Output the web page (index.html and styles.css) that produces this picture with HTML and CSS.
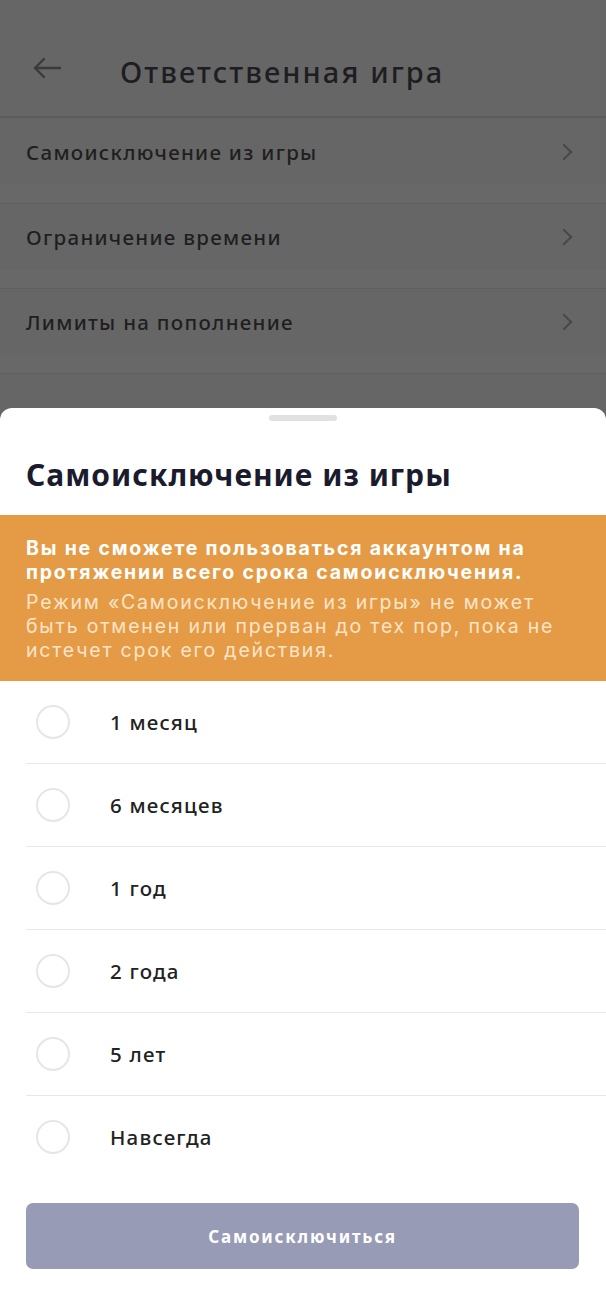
FILE: index.html
```html
<!DOCTYPE html>
<html lang="ru">
<head>
    <meta charset="UTF-8">
    <meta name="viewport" content="width=device-width, initial-scale=1.0">
    <title>Ответственная игра</title>
    <link rel="stylesheet" href="styles.css">
</head>
<body>
    <div class="screen">
        <header class="topbar">
            <svg class="back" width="30" height="22" viewBox="0 0 30 22">
                <path d="M28 11H3M12 2L3 11l9 9" fill="none" stroke="#3a3a3a" stroke-width="2.4" stroke-linecap="round" stroke-linejoin="round"/>
            </svg>
            <h1>Ответственная игра</h1>
        </header>

        <ul class="menu">
            <li>Самоисключение из игры <span class="chev"></span></li>
            <li>Ограничение времени <span class="chev"></span></li>
            <li>Лимиты на пополнение <span class="chev"></span></li>
        </ul>
    </div>

    <section class="sheet">
        <div class="handle"></div>
        <h2>Самоисключение из игры</h2>

        <div class="warning">
            <p class="warning-title">Вы не сможете пользоваться аккаунтом на<br>протяжении всего срока самоисключения.</p>
            <p>Режим «Самоисключение из игры» не может<br>быть отменен или прерван до тех пор, пока не<br>истечет срок его действия.</p>
        </div>

        <ul class="options">
            <li><span class="radio"></span>1 месяц</li>
            <li><span class="radio"></span>6 месяцев</li>
            <li><span class="radio"></span>1 год</li>
            <li><span class="radio"></span>2 года</li>
            <li><span class="radio"></span>5 лет</li>
            <li><span class="radio"></span>Навсегда</li>
        </ul>

        <button class="submit">Самоисключиться</button>
    </section>
</body>
</html>
```

FILE: styles.css
```css
body {
    margin: 0;
    width: 606px;
    height: 1310px;
    overflow: hidden;
    background-color: #666;
    font-family: "Noto Sans", "Open Sans", sans-serif;
    color: #1b1b1b;
}
.screen {
    height: 408px;
    background-color: #666;
}
.topbar {
    display: flex;
    align-items: center;
    height: 118px;
    padding: 26px 0 0 32px;
    box-sizing: border-box;
    border-bottom: 2px solid #5c5c5c;
}
.back {
    margin-top: -6px;
}
.topbar h1 {
    margin: 0 0 0 58px;
    font-size: 29px;
    font-weight: 500;
    letter-spacing: 2.1px;
    color: #1e1e22;
}
.menu {
    list-style: none;
    margin: 0;
    padding: 0;
}
.menu li {
    display: flex;
    justify-content: space-between;
    align-items: center;
    height: 67px;
    padding: 0 36px 0 26px;
    font-size: 20.5px;
    font-weight: 500;
    letter-spacing: 1.3px;
    color: #1f1f1f;
    border-bottom: 18px solid #686868;
    box-shadow: 0 1px 0 #5f5f5f;
}
.chev {
    width: 10px;
    height: 10px;
    border-top: 2.2px solid #484848;
    border-right: 2.2px solid #484848;
    transform: rotate(45deg);
}
.sheet {
    background-color: #fff;
    border-radius: 12px 12px 0 0;
    height: 902px;
    box-sizing: border-box;
    padding-top: 7px;
}
.handle {
    width: 68px;
    height: 6px;
    margin: 0 auto;
    border-radius: 3px;
    background-color: #e1e1e4;
}
.sheet h2 {
    margin: 0;
    padding: 33px 26px 0;
    height: 94px;
    box-sizing: border-box;
    font-size: 30px;
    font-weight: 700;
    letter-spacing: 1px;
    color: #1a1c2e;
}
.warning {
    background-color: #e59b46;
    padding: 21px 10px 19px 26px;
    color: #fff;
    font-family: Inter, "Noto Sans", sans-serif;
    font-size: 19.5px;
    line-height: 24px;
    white-space: nowrap;
}
.warning p {
    margin: 0;
    letter-spacing: 1.8px;
    color: #fbe4c8;
}
.warning .warning-title {
    font-weight: 700;
    letter-spacing: 1.8px;
    color: #fff;
    margin-bottom: 6px;
}
.options {
    list-style: none;
    margin: 0 0 0 26px;
    padding: 0;
}
.options li {
    display: flex;
    align-items: center;
    height: 82px;
    border-bottom: 1px solid #e8e8e8;
    font-size: 20.5px;
    font-weight: 500;
    letter-spacing: 1.2px;
    color: #222;
}
.options li:last-child {
    border-bottom: none;
}
.radio {
    width: 30px;
    height: 30px;
    border: 2px solid #e6e6e6;
    border-radius: 50%;
    margin: 0 40px 0 10px;
}
.submit {
    display: block;
    width: 553px;
    height: 66px;
    margin: 25px 0 0 26px;
    border: none;
    border-radius: 7px;
    background-color: #979bb5;
    color: #fff;
    font-family: inherit;
    font-size: 17px;
    font-weight: 700;
    letter-spacing: 1.8px;
}
```
